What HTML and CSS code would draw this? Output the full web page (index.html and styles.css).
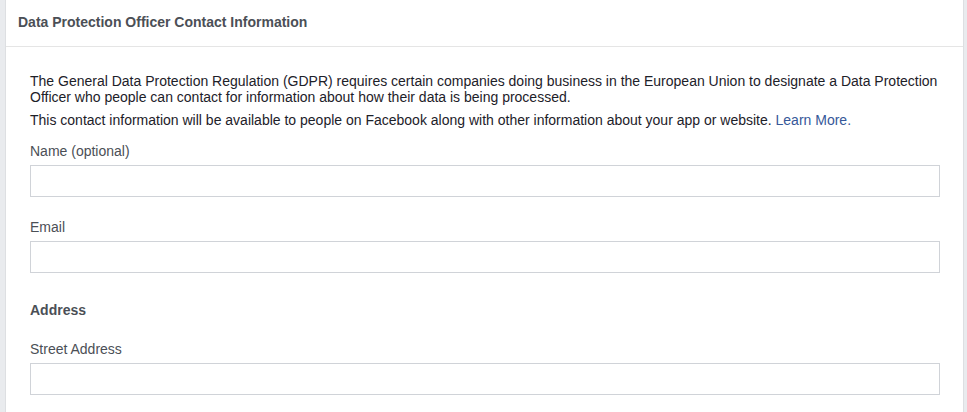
FILE: index.html
```html
<!DOCTYPE html>
<html lang="en">
<head>
<meta charset="utf-8">
<title>Data Protection Officer Contact Information</title>
<link rel="stylesheet" href="styles.css">
</head>
<body>
<div class="card">
  <div class="card-header">Data Protection Officer Contact Information</div>
  <div class="card-body">
    <p class="intro">The General Data Protection Regulation (GDPR) requires certain companies doing business in the European Union to designate a Data Protection Officer who people can contact for information about how their data is being processed.</p>
    <p class="intro second">This contact information will be available to people on Facebook along with other information about your app or website. <a class="link" href="#">Learn More.</a></p>
    <div class="field first">
      <label class="label">Name (optional)</label>
      <input class="input" type="text">
    </div>
    <div class="field">
      <label class="label">Email</label>
      <input class="input" type="text">
    </div>
    <div class="section-title">Address</div>
    <div class="field street">
      <label class="label">Street Address</label>
      <input class="input" type="text">
    </div>
  </div>
</div>
</body>
</html>
```
FILE: styles.css
```css
html, body {
  margin: 0;
  height: 100%;
}
body {
  background: #e9ebee;
  padding: 0 3px 0 5px;
  font-family: "Liberation Sans", Arial, Helvetica, sans-serif;
  font-size: 14px;
  color: #1d2129;
  overflow: hidden;
}
.card {
  background: #fff;
  border: 1px solid #dddfe2;
  border-top: none;
  min-height: 100%;
  box-sizing: border-box;
}
.card-header {
  height: 47px;
  box-sizing: border-box;
  padding: 14px 12px 0;
  line-height: 16px;
  font-weight: bold;
  color: #4b4f56;
  border-bottom: 1px solid #e5e5e5;
}
.card-body {
  padding: 26px 23px 20px 24px;
}
.intro {
  margin: 0;
  line-height: 16px;
}
.intro.second {
  margin-top: 7px;
}
.link {
  color: #365899;
  text-decoration: none;
}
.field {
  display: flex;
  flex-direction: column;
  margin-top: 22px;
}
.field.first {
  margin-top: 15px;
}
.field.street {
  margin-top: 23px;
}
.label {
  line-height: 16px;
  color: #4b4f56;
  margin-bottom: 6px;
}
.input {
  height: 32px;
  box-sizing: border-box;
  border: 1px solid #d0d3d8;
  border-radius: 0;
  margin: 0;
  padding: 0 8px;
  font-family: inherit;
  font-size: 14px;
  background: #fff;
}
.section-title {
  margin-top: 29px;
  line-height: 16px;
  font-weight: bold;
  color: #4b4f56;
}
```
